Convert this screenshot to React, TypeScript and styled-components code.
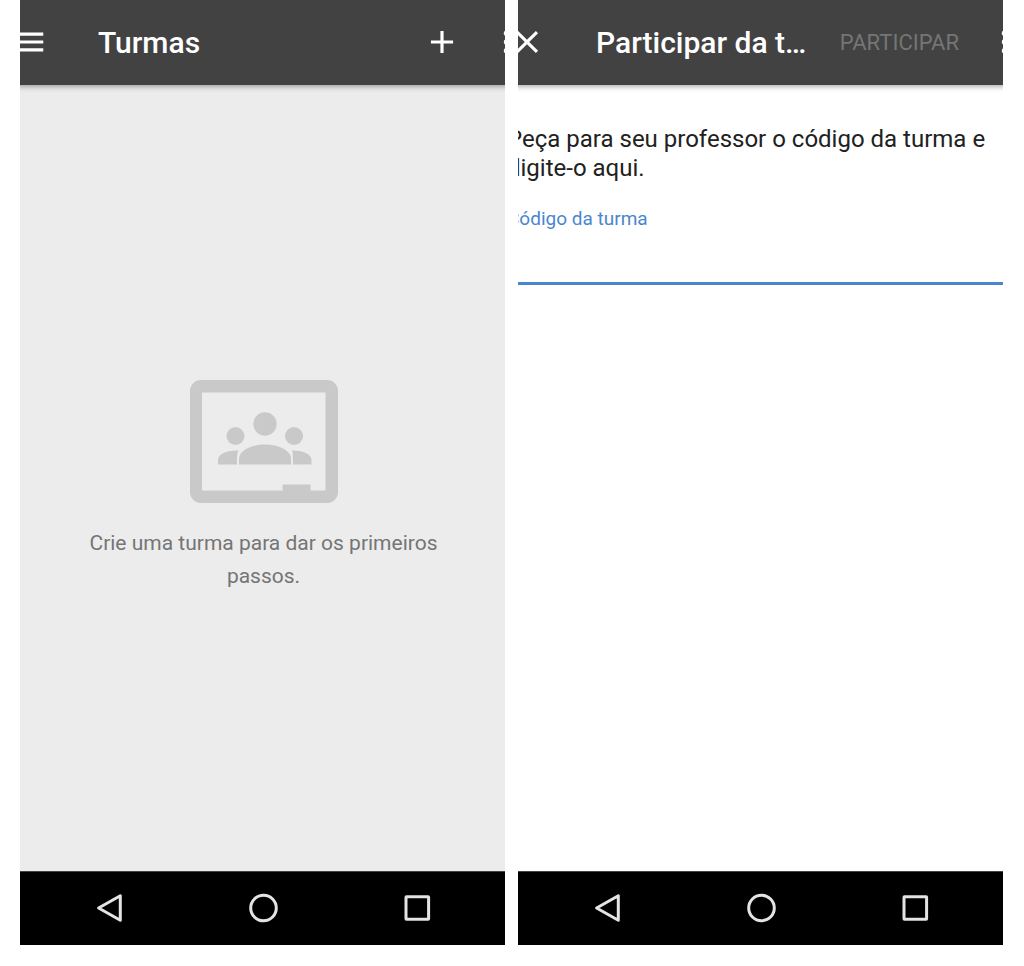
import React from "react";
import styled, { createGlobalStyle } from "styled-components";

const GlobalStyle = createGlobalStyle`
  * {
    box-sizing: border-box;
  }

  body {
    margin: 0;
    background: #ffffff;
    font-family: Roboto, "Noto Sans", sans-serif;
  }
`;

const Page = styled.main`
  display: grid;
  grid-template-columns: 1fr 1fr;
  gap: 13px;
  min-height: 100vh;
  padding: 0 21px 21px 20px;
`;

const Phone = styled.section<{ $surface: string }>`
  display: flex;
  flex-direction: column;
  min-width: 0;
  overflow: hidden;
  background: ${(p) => p.$surface};
`;

const AppBar = styled.header`
  z-index: 1;
  display: flex;
  align-items: center;
  height: 85px;
  margin: 0 -20px 0 -10px;
  background: #424242;
  box-shadow: 0 1px 6px rgba(0, 0, 0, 0.4);
  color: #ffffff;
`;

const IconButton = styled.button`
  display: flex;
  flex: none;
  padding: 0 0 2px;
  border: 0;
  background: none;
  color: inherit;
`;

const Title = styled.h1`
  flex: 1;
  min-width: 0;
  margin: 0 24px 0 50px;
  overflow: hidden;
  font-size: 30px;
  font-weight: 500;
  line-height: 36px;
  text-overflow: ellipsis;
  white-space: nowrap;
`;

const Actions = styled.div`
  display: flex;
  flex: none;
  align-items: center;
  gap: 26px;
`;

const JoinButton = styled.button`
  padding: 0;
  border: 0;
  background: none;
  color: #757575;
  font: 400 22px/36px Roboto, "Noto Sans", sans-serif;
  text-transform: uppercase;
`;

const EmptyState = styled.div`
  display: flex;
  flex: 1;
  flex-direction: column;
  align-items: center;
  justify-content: center;
  gap: 23px;
  padding: 17px 59px 0 61px;
`;

const EmptyText = styled.p`
  margin: 0;
  color: #757575;
  font-size: 21px;
  line-height: 33px;
  text-align: center;
`;

const JoinForm = styled.form`
  display: flex;
  flex: 1;
  flex-direction: column;
  margin: 0 -11px;
  padding-top: 40px;
`;

const Instruction = styled.p`
  margin: 0;
  color: #212121;
  font-size: 24px;
  line-height: 29px;
`;

const FieldLabel = styled.label`
  margin-top: 24px;
  color: #4a86cf;
  font-size: 19px;
  line-height: 24px;
`;

const CodeInput = styled.input`
  width: 100%;
  height: 54px;
  padding: 0;
  border: 0;
  border-bottom: 3px solid #4a86cf;
  outline: 0;
  background: transparent;
  color: #212121;
  font: 400 24px/29px Roboto, "Noto Sans", sans-serif;
`;

const NavBar = styled.nav`
  display: flex;
  align-items: center;
  justify-content: center;
  gap: 118px;
  height: 74px;
  border-top: 1px solid #444444;
  background: #000000;
  color: #e4e4e4;
`;

const Glyph = ({ children }: { children: React.ReactNode }) => (
  <svg width="38" height="38" viewBox="0 0 24 24" fill="currentColor" aria-hidden="true">
    {children}
  </svg>
);

const MoreButton = () => (
  <IconButton type="button" aria-label="Mais opções">
    <Glyph>
      <circle cx="12.4" cy="6.4" r="1.8" />
      <circle cx="12.4" cy="12" r="1.8" />
      <circle cx="12.4" cy="17.6" r="1.8" />
    </Glyph>
  </IconButton>
);

const NavGlyph = ({ children }: { children: React.ReactNode }) => (
  <svg
    width="36"
    height="36"
    viewBox="0 0 36 36"
    fill="none"
    stroke="currentColor"
    strokeWidth="3"
    strokeLinejoin="round"
    aria-hidden="true"
  >
    {children}
  </svg>
);

const SystemNav = () => (
  <NavBar aria-label="Navegação do sistema">
    <IconButton type="button" aria-label="Voltar">
      <NavGlyph>
        <path d="M7.600 18 29.300 5.700v24.600z" />
      </NavGlyph>
    </IconButton>
    <IconButton type="button" aria-label="Início">
      <NavGlyph>
        <circle cx="18.5" cy="18" r="12.8" />
      </NavGlyph>
    </IconButton>
    <IconButton type="button" aria-label="Recentes">
      <NavGlyph>
        <rect x="7" y="6.7" width="22.6" height="22.6" rx="0.5" />
      </NavGlyph>
    </IconButton>
  </NavBar>
);

const ClassroomArt = () => (
  <svg width="148" height="124" viewBox="0 0 148 124" fill="#c9c9c9" aria-hidden="true">
    <path
      fillRule="evenodd"
      d="M11 0h126a11 11 0 0 1 11 11v101a11 11 0 0 1-11 11H11a11 11 0 0 1-11-11V11A11 11 0 0 1 11 0zM12 12.500v98h80.500v-6h28v6h15V12.500z"
    />
    <circle cx="75" cy="44" r="11.7" />
    <circle cx="45.5" cy="56" r="9" />
    <circle cx="104" cy="56" r="9" />
    <path d="M49 84.500V79c0-9 13-14.500 26-14.500s26 5.500 26 14.500v5.500z" />
    <path d="M28 84.500V80c0-6 9-10 20.500-9.500-1.500 3-1.500 6-1.500 14z" />
    <path d="M121.500 84.500V80c0-6-9-10-19.500-9.500 1 3 1 6 1 14z" />
  </svg>
);

export default function App() {
  return (
    <>
      <GlobalStyle />
      <Page>
        <Phone $surface="#ececec">
          <AppBar>
            <IconButton type="button" aria-label="Menu">
              <Glyph>
                <path d="M3 18h18v-2H3zm0-5h18v-2H3zm0-7v2h18V6z" />
              </Glyph>
            </IconButton>
            <Title>Turmas</Title>
            <Actions>
              <IconButton type="button" aria-label="Adicionar turma">
                <Glyph>
                  <path d="M19 13h-6v6h-2v-6H5v-2h6V5h2v6h6z" />
                </Glyph>
              </IconButton>
              <MoreButton />
            </Actions>
          </AppBar>
          <EmptyState>
            <ClassroomArt />
            <EmptyText>Crie uma turma para dar os primeiros passos.</EmptyText>
          </EmptyState>
          <SystemNav />
        </Phone>
        <Phone $surface="#ffffff">
          <AppBar>
            <IconButton type="button" aria-label="Fechar">
              <Glyph>
                <path d="M19 6.400 17.600 5 12 10.600 6.400 5 5 6.400 10.600 12 5 17.600 6.400 19 12 13.400 17.600 19 19 17.600 13.400 12z" />
              </Glyph>
            </IconButton>
            <Title>Participar da turma</Title>
            <Actions>
              <JoinButton type="button">Participar</JoinButton>
              <MoreButton />
            </Actions>
          </AppBar>
          <JoinForm>
            <Instruction>Peça para seu professor o código da turma e digite-o aqui.</Instruction>
            <FieldLabel htmlFor="class-code">Código da turma</FieldLabel>
            <CodeInput id="class-code" type="text" />
          </JoinForm>
          <SystemNav />
        </Phone>
      </Page>
    </>
  );
}
